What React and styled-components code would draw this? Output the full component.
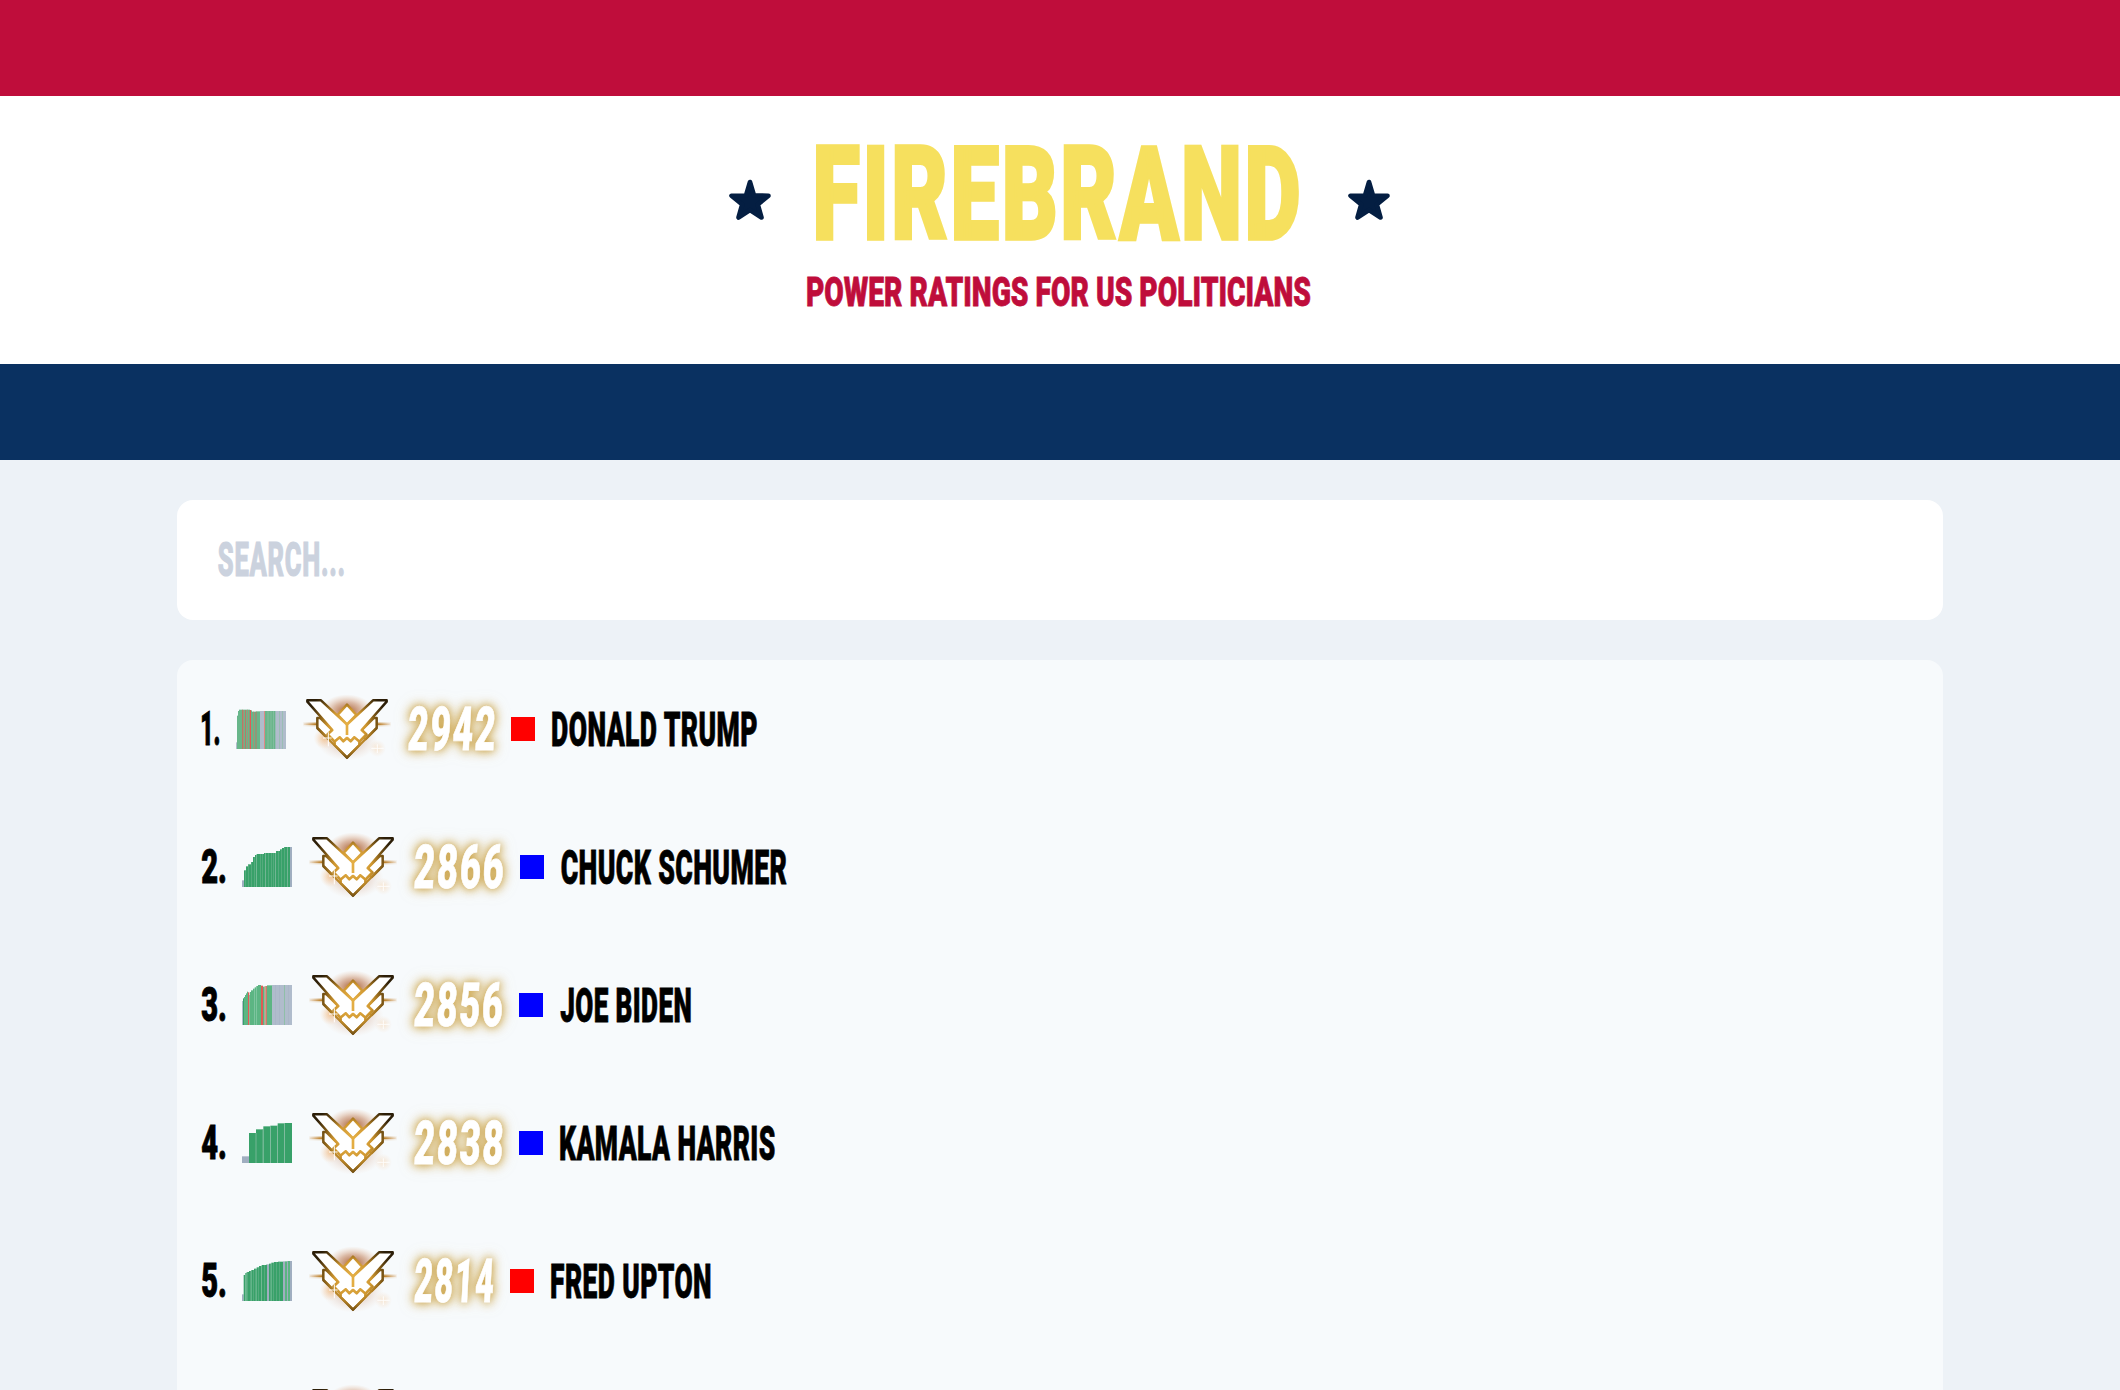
import React, { useLayoutEffect, useRef, useState } from "react";
import styled, { createGlobalStyle } from "styled-components";

const GlobalStyle = createGlobalStyle`
  * { box-sizing: border-box; }
  body {
    margin: 0;
    background: #edf2f7;
    font-family: Roboto, "Liberation Sans", sans-serif;
    overflow: hidden;
  }
`;

const Page = styled.div`
  height: 1390px;
  overflow: hidden;
  display: flex;
  flex-direction: column;
`;

const Stripe = styled.div`
  height: 96px;
  flex: none;
  background: ${(p) => p.$color};
`;

const Header = styled.header`
  height: 268px;
  flex: none;
  background: #fff;
  padding-top: 49px;
  display: flex;
  flex-direction: column;
  align-items: center;
  gap: 36px;
`;

const Brand = styled.div`
  display: flex;
  align-items: center;
  justify-content: space-between;
  width: 661px;
  height: 96px;
  margin-left: -1px;
`;

const StarIcon = styled.svg`
  width: 42px;
  height: 42px;
  margin-top: 14px;
`;

const Title = styled.h1`
  margin: 0 6px 0 0;
  color: #f6e05e;
  font-weight: 900;
`;

const Subtitle = styled.h2`
  margin: 0 0 0 -2px;
  color: #bf0d3b;
  font-weight: 900;
`;

const Content = styled.main`
  padding: 40px 177px 0;
  display: flex;
  flex-direction: column;
  gap: 40px;
`;

const SearchBox = styled.div`
  height: 120px;
  flex: none;
  border-radius: 16px;
  background: #fff;
  padding: 0 41px;
  display: flex;
  align-items: center;
  color: #cbd2de;
  font-weight: 800;
`;

const List = styled.div`
  background: #f7fafc;
  border-radius: 16px 16px 0 0;
  padding-left: 24px;
`;

const Row = styled.div`
  height: 138px;
  display: flex;
  align-items: center;
  gap: 17px;
  color: #000;
  font-weight: 900;
`;

const Rating = styled.div`
  color: #fff;
  filter: drop-shadow(0 0 4px rgba(196, 150, 45, 0.8)) drop-shadow(0 0 6px rgba(203, 160, 60, 0.6));
`;

const Party = styled.div`
  width: 24px;
  height: 24px;
  flex: none;
  background: ${(p) => p.$color};
`;

const ChartSvg = styled.svg`
  width: 50px;
  height: 40px;
  flex: none;
`;

const EmblemSvg = styled.svg`
  width: 88px;
  height: 64px;
  flex: none;
  overflow: visible;
`;

const RankSpacer = styled.div`
  width: ${(p) => p.$width}px;
  flex: none;
`;

const FitBox = styled.span`
  display: block;
  flex: none;
  width: ${(p) => p.$width}px;
  height: ${(p) => p.$cap}px;
  line-height: ${(p) => p.$cap}px;
  font-size: ${(p) => (p.$cap - p.$stroke) / 0.711}px;
  white-space: nowrap;
`;

const FitInner = styled.span`
  display: inline-block;
  vertical-align: top;
  transform-origin: 0 50%;
  word-spacing: ${(p) => p.$word}em;
  letter-spacing: ${(p) => p.$letter}em;
  -webkit-text-stroke: ${(p) => p.$stroke}px currentColor;
`;

/* Condensed lettering: the glyphs are squeezed so their ink fills the given width. */
function Condensed({ children, width, cap, slant = 0, word = 0, letter = 0, stroke = 0, nudge = 0, drop = 0 }) {
  const ref = useRef(null);
  const [fit, setFit] = useState({ x: 0, scale: 1 });
  useLayoutEffect(() => {
    const el = ref.current;
    const cs = getComputedStyle(el);
    const ctx = document.createElement("canvas").getContext("2d");
    ctx.font = `${cs.fontWeight} ${cs.fontSize} ${cs.fontFamily}`;
    const m = ctx.measureText(children);
    const inkLeft = -m.actualBoundingBoxLeft;
    const bearingRight = m.width - m.actualBoundingBoxRight;
    const trailing = parseFloat(cs.fontSize) * letter;
    const ink = el.offsetWidth - inkLeft - bearingRight - trailing + stroke;
    const scale = width / ink;
    setFit({ x: -(inkLeft - stroke / 2) * scale, scale });
  }, [children, width, letter, stroke]);
  return (
    <FitBox $width={width} $cap={cap} $stroke={stroke}>
      <FitInner
        ref={ref}
        $word={word}
        $letter={letter}
        $stroke={stroke}
        style={{
          transform: `translate(${fit.x + nudge}px, ${drop}px) skewX(${-slant}deg) scaleX(${fit.scale})`,
        }}
      >
        {children}
      </FitInner>
    </FitBox>
  );
}

function Star() {
  return (
    <StarIcon viewBox="0 0 42 42">
      <path
        d="M21 3 L25 16.500 L39.500 16.700 L28.800 25.500 L32.500 38.500 L21 31 L9.500 38.500 L13.200 25.500 L2.500 16.700 L17 16.500 Z"
        fill="#041e42"
        stroke="#041e42"
        strokeWidth="4.600"
        strokeLinejoin="round"
      />
    </StarIcon>
  );
}

function Emblem() {
  return (
    <EmblemSvg viewBox="24 36 264 192">
      <defs>
        <radialGradient id="edge" gradientUnits="userSpaceOnUse" cx="156" cy="128" r="125">
          <stop offset="0" stopColor="#eab64d" />
          <stop offset="0.45" stopColor="#cf9730" />
          <stop offset="0.7" stopColor="#805915" />
          <stop offset="1" stopColor="#2c1e08" />
        </radialGradient>
        <radialGradient id="halo">
          <stop offset="0" stopColor="#9a4410" stopOpacity="0.9" />
          <stop offset="0.55" stopColor="#b86a3c" stopOpacity="0.45" />
          <stop offset="1" stopColor="#e0a070" stopOpacity="0" />
        </radialGradient>
        <radialGradient id="warm">
          <stop offset="0" stopColor="#f2a048" stopOpacity="0.5" />
          <stop offset="1" stopColor="#f5b880" stopOpacity="0" />
        </radialGradient>
        <linearGradient id="flare">
          <stop offset="0" stopColor="#c98a40" stopOpacity="0.15" />
          <stop offset="0.15" stopColor="#b67718" />
          <stop offset="0.85" stopColor="#b67718" />
          <stop offset="1" stopColor="#c98a40" stopOpacity="0.15" />
        </linearGradient>
      </defs>
      <ellipse cx="156" cy="80" rx="80" ry="52" fill="url(#halo)" />
      <ellipse cx="156" cy="165" rx="92" ry="62" fill="url(#halo)" opacity="0.4" />
      <circle cx="88" cy="160" r="32" fill="url(#warm)" />
      <circle cx="247" cy="190" r="26" fill="url(#warm)" opacity="0.5" />
      <rect x="24" y="111" width="264" height="13" fill="url(#flare)" opacity="0.35" />
      <rect x="26" y="115" width="260" height="5" fill="url(#flare)" />
      <g fill="#fff" stroke="url(#edge)" strokeWidth="7.500" strokeLinejoin="round">
        <path d="M67 99 L76 99 L112 135 L98 148 L108 158 L100 162 L67 129 Z" />
        <path d="M245 99 L236 99 L200 135 L214 148 L204 158 L212 162 L245 129 Z" />
        <path d="M156 59 L184 90 L156 118 L128 90 Z" />
        <path d="M37 46 H78 L156 119 L234 46 H275 V50 L200 135 L214 148 L193 170 L178 157 L167 169 L156 159 L145 169 L134 157 L119 170 L98 148 L112 135 L37 50 Z" />
        <path d="M119 170 L134 157 L145 169 L156 159 L167 169 L178 157 L193 170 L193 180 L156 218 L119 180 Z" />
      </g>
      <path d="M156 114 V150" fill="none" stroke="#e3ad43" strokeWidth="8" />
      <path d="M67 129 L156 218 L245 129" fill="none" stroke="url(#edge)" strokeWidth="7" />
      <path d="M84 159 H110 M100 142 V184" stroke="#fff" strokeWidth="3" />
      <path d="M229 190 H266 M247 178 V204" stroke="#fff" strokeWidth="3" opacity="0.9" />
    </EmblemSvg>
  );
}

const GREEN = "#38a169";
const MID = "#5cb583";
const PALE = "#68b68a";
const GRAY = "#a0aec0";
const MIST = "#b0bccc";
const RED = "#e05a55";
const ROSE = "#c4806c";
const MINT = "#8fbfa8";

/* Each bar is [start, end, height, colour] on a 150 x 120 grid. */
const charts = {
  trump: [
    [0, 3, 20, MIST], [3, 6, 100, PALE], [6, 9, 114, PALE], [9, 42, 118, PALE], [42, 48, 116, PALE],
    [48, 60, 112, PALE], [60, 72, 113, PALE], [72, 85, 114, MIST], [85, 87, 114, RED], [87, 120, 114, PALE],
    [120, 150, 114, MIST], [18, 20, 118, RED], [22, 24, 117, ROSE], [28, 30, 117, RED], [34, 36, 118, ROSE],
    [41, 45, 117, RED], [52, 54, 112, ROSE], [59, 61, 112, RED], [95, 97, 114, MINT], [104, 106, 114, MINT],
    [112, 114, 114, MINT], [118, 120, 114, MIST], [129, 131, 114, MINT], [138, 140, 114, MINT],
  ],
  schumer: [
    [0, 6, 20, GRAY], [6, 12, 50, GREEN], [12, 18, 62, GREEN], [18, 27, 68, GREEN], [27, 33, 75, GREEN],
    [33, 39, 90, GREEN], [39, 44, 96, GREEN], [44, 66, 99, GREEN], [66, 102, 102, GREEN], [102, 114, 108, GREEN],
    [114, 120, 113, GREEN], [120, 126, 117, GREEN], [126, 144, 120, GREEN], [144, 150, 120, GRAY],
    [11, 12, 50, MINT], [20, 21, 68, MINT], [29, 30, 75, MINT], [38, 39, 90, MINT], [44, 45, 96, MINT],
    [54, 55, 99, MINT], [60, 61, 99, MINT], [69, 71, 102, MINT], [78, 79, 102, MINT], [87, 88, 102, MINT],
    [93, 94, 102, MINT], [100, 102, 102, MINT], [109, 110, 108, MINT], [117, 118, 113, MINT],
    [126, 127, 120, MINT], [135, 137, 120, MINT],
  ],
  biden: [
    [0, 3, 72, MIST], [3, 6, 80, GREEN], [6, 9, 84, MID], [9, 12, 90, MID], [12, 15, 95, MID], [15, 18, 100, MID],
    [18, 22, 98, RED], [22, 24, 90, MID], [24, 27, 99, MID], [27, 33, 104, MID], [33, 38, 109, MID],
    [38, 43, 113, MID], [43, 48, 117, MID], [48, 57, 120, MID], [57, 63, 118, RED], [63, 68, 115, MID],
    [68, 71, 117, ROSE], [71, 75, 117, ROSE], [75, 90, 119, MID], [90, 126, 120, MIST], [126, 129, 120, MINT],
    [129, 150, 120, MIST], [99, 100, 120, GRAY], [112, 113, 120, GRAY], [140, 141, 120, GRAY],
  ],
  harris: [
    [0, 21, 20, GRAY], [21, 42, 90, GREEN], [42, 64, 101, GREEN], [64, 85, 110, GREEN], [85, 107, 112, GREEN],
    [107, 128, 119, GREEN], [128, 150, 120, GREEN], [41, 43, 90, MINT], [62, 64, 101, MINT], [84, 86, 110, MINT],
    [105, 107, 112, MINT], [127, 129, 119, MINT],
  ],
  upton: [
    [0, 5, 20, GRAY], [5, 10, 78, GREEN], [10, 14, 84, GREEN], [14, 21, 87, GREEN], [21, 28, 90, GREEN],
    [28, 36, 93, GREEN], [36, 44, 97, GREEN], [44, 51, 101, GREEN], [51, 59, 105, GREEN], [59, 72, 108, GREEN],
    [72, 75, 109, GREEN], [75, 81, 110, GRAY], [81, 88, 112, GREEN], [88, 96, 115, GREEN], [96, 108, 117, GREEN],
    [108, 123, 118, GREEN], [123, 129, 119, GRAY], [129, 135, 119, MID], [135, 138, 120, GRAY], [138, 144, 120, MID],
    [144, 150, 120, GRAY], [9, 10, 78, MINT], [17, 18, 87, MINT], [25, 26, 90, MINT], [33, 34, 93, MINT],
    [41, 42, 97, MINT], [49, 50, 101, MINT], [57, 58, 105, MINT], [66, 67, 108, MINT], [86, 87, 112, MINT],
    [94, 95, 115, MINT], [103, 104, 117, MINT], [112, 113, 118, MINT],
  ],
};

function Chart({ bars }) {
  return (
    <ChartSvg viewBox="0 0 150 120">
      {bars.map(([from, to, h, color], i) => (
        <rect key={i} x={from} y={120 - h} width={to - from} height={h} fill={color} />
      ))}
    </ChartSvg>
  );
}

const people = [
  { rank: "1.", rankWidth: 18, chart: "trump", rating: "2942", ratingWidth: 86, party: "#f00", name: "DONALD TRUMP", nameWidth: 205 },
  { rank: "2.", rankWidth: 24, chart: "schumer", rating: "2866", ratingWidth: 89, party: "#00f", name: "CHUCK SCHUMER", nameWidth: 226 },
  { rank: "3.", rankWidth: 24, chart: "biden", rating: "2856", ratingWidth: 88, party: "#00f", name: "JOE BIDEN", nameWidth: 131 },
  { rank: "4.", rankWidth: 24, chart: "harris", rating: "2838", ratingWidth: 88, party: "#00f", name: "KAMALA HARRIS", nameWidth: 215 },
  { rank: "5.", rankWidth: 24, chart: "upton", rating: "2814", ratingWidth: 79, party: "#f00", name: "FRED UPTON", nameWidth: 160 },
];

export default function App() {
  return (
    <Page>
      <GlobalStyle />
      <Stripe $color="#bf0d3b" />
      <Header>
        <Brand>
          <Star />
          <Title><Condensed width={483} cap={96} letter={0.03} stroke={3.5} nudge={1} drop={2}>FIREBRAND</Condensed></Title>
          <Star />
        </Brand>
        <Subtitle><Condensed width={504} cap={30} stroke={0.8}>POWER RATINGS FOR US POLITICIANS</Condensed></Subtitle>
      </Header>
      <Stripe $color="#0a3161" />
      <Content>
        <SearchBox><Condensed width={126} cap={35} letter={0.03} stroke={1.2}>SEARCH...</Condensed></SearchBox>
        <List>
          {people.map((p) => (
            <Row key={p.rank}>
              <Condensed width={p.rankWidth} cap={35} stroke={1} nudge={0.5}>{p.rank}</Condensed>
              <Chart bars={charts[p.chart]} />
              <Emblem />
              <Rating>
                <Condensed width={p.ratingWidth} cap={44} slant={3} letter={0.05} stroke={0.8} nudge={0.5} drop={0.6}>{p.rating}</Condensed>
              </Rating>
              <Party $color={p.party} />
              <Condensed width={p.nameWidth} cap={35} letter={0.015} stroke={0.8}>{p.name}</Condensed>
            </Row>
          ))}
          <Row>
            <RankSpacer $width={24} />
            <Chart bars={charts.upton} />
            <Emblem />
          </Row>
        </List>
      </Content>
    </Page>
  );
}
